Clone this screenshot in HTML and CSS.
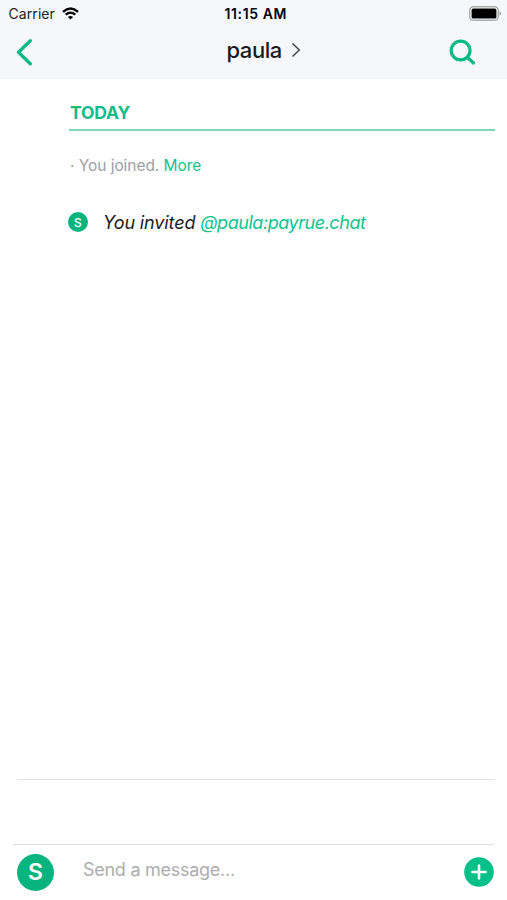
FILE: index.html
```html
<!DOCTYPE html>
<html lang="en">
<head>
<meta charset="utf-8">
<title>paula</title>
<link rel="stylesheet" href="styles.css">
</head>
<body>
<div class="app">
  <header class="header">
    <div class="status">
      <div class="carrier"><span>Carrier</span>
        <svg class="wifi" width="17" height="13" viewBox="0 0 17 13" fill="none" stroke="#000" stroke-width="2.3"><path d="M1 4.8Q8.500-1.900 16 4.800M3.700 7.700Q8.500 3.600 13.300 7.700"/><path d="M5.900 9.900Q8.500 7.900 11.100 9.900L8.500 12.500Z" fill="#000" stroke="none"/></svg>
      </div>
      <time class="clock">11:15 AM</time>
      <svg class="battery" width="32" height="15" viewBox="0 0 32 15"><rect x=".8" y=".8" width="28.400" height="13.400" rx="3.500" fill="#fff" stroke="#aaa" stroke-width="1.400"/><rect x="2.600" y="2.600" width="24.800" height="9.800" rx="1.500"/><path d="M30.500 5.300Q32 5.900 32 7.500T30.500 9.700Z" fill="#999"/></svg>
    </div>
    <nav class="nav">
      <svg class="back" width="17" height="28" viewBox="0 0 17 28" fill="none" stroke="#0bb985" stroke-width="3.300" stroke-linecap="round" stroke-linejoin="round"><path d="M14.300 2.700L2.500 14.300L14.300 25.800"/></svg>
      <h1 class="title">paula <svg width="10" height="16" viewBox="0 0 10 16" fill="none" stroke="#444" stroke-width="1.500"><path d="M1.500 1.500L8.300 8L1.500 14.500"/></svg></h1>
      <svg class="search" width="27" height="27" viewBox="0 0 27 27" fill="none" stroke="#0bb985" stroke-width="3.200" stroke-linecap="round"><circle cx="11.600" cy="11.500" r="9.400"/><path d="M18.500 18.500L24.500 24"/></svg>
    </nav>
  </header>
  <main class="timeline">
    <h2 class="day">TODAY</h2>
    <p class="joined">· You joined. <a>More</a></p>
    <div class="event">
      <span class="avatar small">S</span>
      <p class="invite">You invited <a>@paula:payrue.chat</a></p>
    </div>
  </main>
  <div class="activity"></div>
  <footer class="composer">
    <span class="avatar large">S</span>
    <span class="placeholder">Send a message...</span>
    <svg class="add" width="30" height="30" viewBox="0 0 30 30"><circle cx="15" cy="15" r="14.800" fill="#05c088"/><path d="M15 8.500V21.500M8.500 15H21.500" stroke="#fff" stroke-width="2.600" stroke-linecap="round"/></svg>
  </footer>
</div>
</body>
</html>
```
FILE: styles.css
```css
* { box-sizing: border-box; margin: 0; padding: 0; }
body { background: #fff; font-family: Inter, "Liberation Sans", sans-serif; color: #1b1b1b; }
svg { display: block; flex: none; }
.app { width: 507px; height: 900px; display: flex; flex-direction: column; overflow: hidden; }
.header { height: 79px; background: #f5f7fb; }
.status { height: 27px; padding: 0 6px 0 8.5px; display: grid; grid-template-columns: 1fr auto 1fr; align-items: center; }
.carrier { display: flex; align-items: center; gap: 7px; font-size: 14px; line-height: 18px; letter-spacing: .08px; color: #222; }
.clock { font-size: 14px; line-height: 18px; font-weight: 600; letter-spacing: .58px; color: #000; margin-left: 2px; }
.battery { justify-self: end; }
.nav { height: 52px; padding: 0 31.5px 0 16px; display: grid; grid-template-columns: 210.5px auto 1fr; }
.back { margin-top: 11px; }
.title { display: flex; align-items: center; gap: 9px; height: 45px; font-size: 22px; font-weight: 450; letter-spacing: -.45px; }
.search { justify-self: end; margin-top: 12px; }
.timeline { flex: 1; padding: 22px 12px 0 69px; }
a { color: #0fc48c; }
.day { height: 30px; padding-left: 1px; border-bottom: 2px solid #7bd9b7; font-size: 17.5px; line-height: 23px; font-weight: 700; letter-spacing: -.15px; color: #0fbd87; }
.joined { margin-top: 25px; padding-left: 1px; font-size: 15.500px; line-height: 20px; letter-spacing: -.05px; color: #9c9ea5; }
.event { display: flex; align-items: center; gap: 15px; margin-top: 34px; height: 24px; }
.avatar { display: flex; align-items: center; justify-content: center; flex: none; border-radius: 50%; background: #08b47e; color: #fff; }
.small { width: 20px; height: 20px; margin-left: -1px; font-size: 12px; font-weight: 500; }
.invite { margin-top: 1px; font-size: 18px; line-height: 24px; font-style: italic; letter-spacing: -.13px; white-space: nowrap; }
.invite a { letter-spacing: -.46px; }
.activity { height: 65px; margin: 0 12px 0 17px; border-top: 1px solid #e0e1e4; }
.composer { height: 56px; margin: 0 13px 0 13px; padding: 0 0 1px 4px; border-top: 1px solid #dcdfe3; display: flex; align-items: center; }
.large { width: 37px; height: 37px; font-size: 23px; font-weight: 600; }
.placeholder { margin: -5px auto 0 29px; font-size: 18px; line-height: 24px; letter-spacing: -.27px; color: #adadad; }
```
